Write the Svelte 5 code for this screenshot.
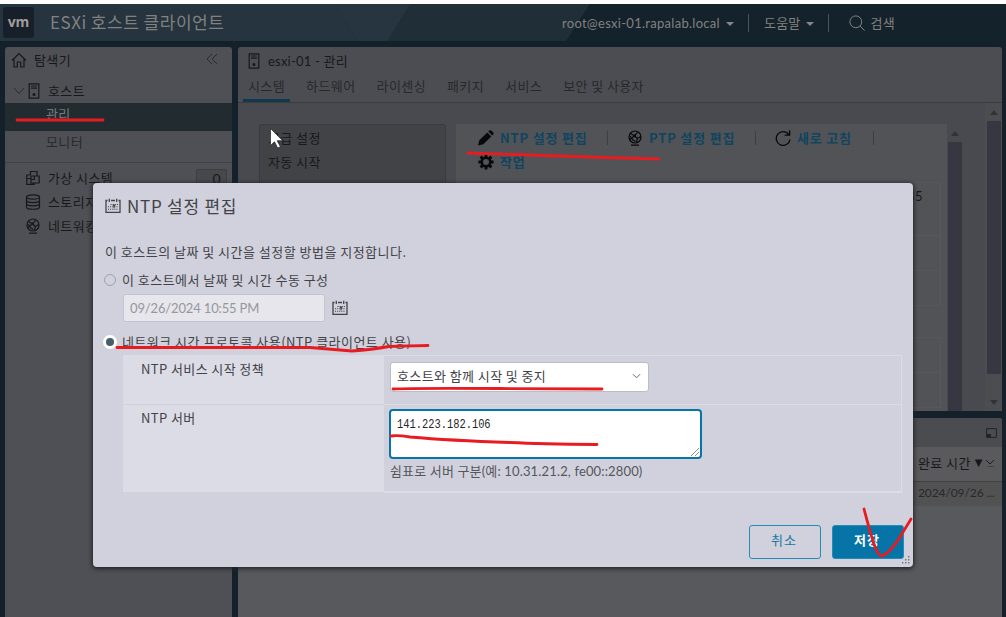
<script lang="ts">
  let tabs: string[] = ["시스템", "하드웨어", "라이센싱", "패키지", "서비스", "보안 및 사용자"];
  let settings: string[] = ["고급 설정", "자동 시작"];
  let inventory = [
    { icon: "vm", label: "가상 시스템", count: "0" },
    { icon: "disk", label: "스토리지", count: "" },
    { icon: "net", label: "네트워킹", count: "" },
  ];
  let activeTab: string = "시스템";
  let mode: string = "ntp";
  let date: string = "09/26/2024 10:55 PM";
  let server: string = "141.223.182.106";
</script>

{#snippet icon(name)}
  <svg class="icon" viewBox="0 0 16 16" fill="none" stroke="currentColor" stroke-width="1.2">
    {#if name == "home"}
      <path d="M1 8.5 8 1.5l7 7M3 7v8h3.3v-5h3.4v5H13V7" />
    {:else if name == "host"}
      <path d="M3.2.8h9.6v14.4H3.2zM5 3h6M5 5.2h6" />
      <circle cx="8" cy="11.4" r=".9" fill="currentColor" />
    {:else if name == "vm"}
      <path d="M5.5 5V1.5H12V6M5.5 5H1.8v9.3h7.500V13M1.800 8.500h4M6 6h8.200v7H6zM9.300 6v3.500H6" />
    {:else if name == "disk"}
      <ellipse cx="8" cy="3" rx="6.5" ry="2.2" />
      <path d="M1.5 3v10c0 3 13 3 13 0V3M1.5 6.3c0 3 13 3 13 0M1.5 9.6c0 3 13 3 13 0" />
    {:else if name == "net"}
      <circle cx="8" cy="7" r="6" />
      <path d="m3.500 3.500 4 2.300 3-3.500M7.500 5.800l2.800 2.700 3.500-2M10.300 8.500l-.8 4M7.500 5.800 3 9.500M4 15.200h8" />
      <path d="m3 6 3 4 2.500 1.500" />
      <circle cx="7.500" cy="5.800" r=".8" />
    {:else if name == "pencil"}
      <path d="m0 15.500 1.300-5.200L9.300 2.500l4 4-8 7.700zM10.300 1.600l1-1q1-.9 2 0l1.900 1.900q.9 1 0 1.900l-1 1z" fill="currentColor" stroke="none" />
    {:else if name == "refresh"}
      <path d="M13.800 4.500A6.900 6.900 0 1 0 15 9.500M14.600.2v4.900H9.700" stroke-width="1.300" />
    {:else if name == "gear"}
      <circle cx="8" cy="8" r="4.300" stroke-width="2.600" />
      <path d="M8 .4v3M8 12.600v3M.4 8h3M12.600 8h3M2.600 2.600l1.800 1.800M11.600 11.600l1.800 1.800M2.600 13.400l1.800-1.800M11.600 4.400l1.800-1.800" stroke-width="2.900" />
    {:else if name == "calendar"}
      <path d="M2.500 2.500H1v11.800h14V2.500h-1.500M6 2.500h4M4.300.8v3.100M11.700.8v3.100" stroke-width="1.300" />
      <path d="M5.500 6.500h8M3 8.800h10.500M3 11.300h10.500" stroke-width="1.100" stroke-dasharray="1.100 1" />
      <path d="M9 6.200v4M7.800 7.500h2.500" />
    {:else if name == "search"}
      <circle cx="6.8" cy="6.8" r="5.9" stroke-width="1" />
      <path d="m11 11 4.6 4.600" stroke-width="1" />
    {/if}
  </svg>
{/snippet}

<div class="app">
  <header>
    <svg class="facets" viewBox="0 0 1006 37" preserveAspectRatio="none">
      <path d="M0 0h1006v37H0z" fill="#14222c" />
      <path d="M0 0h590L566 37H0z" fill="#202e38" />
      <path d="M335 0h75L387 37H357z" fill="#26353f" />
      <path d="M0 0h335l22 37H0z" fill="#25343e" />
    </svg>
    <div class="logo">vm</div>
    <h1>ESXi 호스트 클라이언트</h1>
    <span class="user">root@esxi-01.rapalab.local</span><i class="caret"></i>
    <i class="bar"></i>
    <span class="help">도움말</span><i class="caret"></i>
    <i class="bar second"></i>
    <span class="glass">{@render icon("search")}</span>
    <span>검색</span>
  </header>

  <div class="workspace">
    <nav>
      <div class="nav-title">{@render icon("home")}<span>탐색기</span>
        <svg class="collapse" viewBox="0 0 12 12"><path d="M6 1 1 6l5 5M11 1 6 6l5 5" /></svg>
      </div>
      <div class="nav-host">
        <svg class="chevron" viewBox="0 0 12 8"><path d="m1 1 5 5.5L11 1" /></svg>
        {@render icon("host")}<span>호스트</span>
      </div>
      <div class="nav-sub selected">관리</div>
      <div class="nav-sub">모니터</div>
      <div class="nav-list">
        {#each inventory as item}
          <div class="nav-item">
            {@render icon(item.icon)}<span>{item.label}</span>
            {#if item.count}<b class="count">{item.count}</b>{/if}
          </div>
        {/each}
      </div>
    </nav>

    <div class="right">
      <section class="content">
        <div class="crumb">{@render icon("host")}<span>esxi-01 - 관리</span></div>
        <div class="tabs">
          {#each tabs as tab}
            <button class="tab" class:active={tab == activeTab} on:click={() => (activeTab = tab)}>{tab}</button>
          {/each}
        </div>
        <div class="body">
          <div class="menu">
            {#each settings as item}<div>{item}</div>{/each}
          </div>
          <div class="detail">
            <div class="toolbar">
              <div class="tool ntp">{@render icon("pencil")}<span>NTP 설정 편집</span></div>
              <div class="tool ptp">{@render icon("net")}<span>PTP 설정 편집</span></div>
              <div class="tool fresh">{@render icon("refresh")}<span>새로 고침</span></div>
            </div>
            <div class="toolbar last">
              <div class="tool">{@render icon("gear")}<span>작업</span></div>
            </div>
            <div class="card">
              <div class="cell tall">35</div>
              <div class="cell"></div>
              <div class="cell"></div>
            </div>
            <div class="card">
              <div class="cell"></div>
              <div class="cell"></div>
            </div>
          </div>
          <div class="scroll inner"><i class="up"></i><i class="thumb"></i></div>
          <div class="scroll outer"><i class="up"></i><i class="thumb"></i><i class="down"></i></div>
        </div>
      </section>

      <section class="tasks">
        <div class="tasks-bar">
          <svg viewBox="0 0 11 10"><path d="M.6.6h9.8v8.8H.6z" fill="none" stroke="#222327" /><path d="M1 6h4v3.4H1z" fill="#222327" /></svg>
        </div>
        <div class="tasks-head">완료 시간<small>▼</small>
          <svg viewBox="0 0 10 9"><path d="m1 1 4 4 4-4" fill="none" stroke="#1d1e20" /><path d="M3 7.5h6" stroke="#333" stroke-dasharray="1.4 1" /></svg>
        </div>
        <div class="tasks-row">2024/09/26 ...</div>
      </section>
    </div>
  </div>

  <div class="dialog">
    <h2>{@render icon("calendar")}<span>NTP 설정 편집</span></h2>
    <p>이 호스트의 날짜 및 시간을 설정할 방법을 지정합니다.</p>
    <label class="choice"><i class="radio" class:on={mode == "manual"}></i>이 호스트에서 날짜 및 시간 수동 구성</label>
    <div class="date"><div class="field">{date}</div>{@render icon("calendar")}</div>
    <label class="choice"><i class="radio" class:on={mode == "ntp"}></i>네트워크 시간 프로토콜 사용(NTP 클라이언트 사용)</label>
    <div class="form">
      <div class="name">NTP 서비스 시작 정책</div>
      <div class="value">
        <div class="select">호스트와 함께 시작 및 중지
          <svg viewBox="0 0 10 6"><path d="m1 1 4 4 4-4" /></svg>
        </div>
      </div>
      <div class="name">NTP 서버</div>
      <div class="value server">
        <div class="area"><span>{server}</span>
          <svg viewBox="0 0 10 10"><path d="M1 9 9 1M5 9l4-4" /></svg>
        </div>
        <div class="hint">쉼표로 서버 구분(예: 10.31.21.2, fe00::2800)</div>
      </div>
    </div>
    <div class="actions">
      <button class="cancel">취소</button>
      <button class="save">저장</button>
    </div>
    <svg class="grip" viewBox="0 0 8 8" fill="#77777f"><path d="M6 0h1.4v1.4H6zM3 3h1.4v1.4H3zM6 3h1.4v1.4H6zM0 6h1.4v1.4H0zM3 6h1.4v1.4H3zM6 6h1.4v1.4H6z" /></svg>
  </div>

  <!-- hand-drawn marks and the mouse pointer -->
  <svg class="marks" viewBox="0 0 1006 617">
    <g fill="none" stroke="#e81c20" stroke-width="2.8" stroke-linecap="round" stroke-linejoin="round">
      <path d="M17 120H103" />
      <path d="M468 153L515 154.5L572 156.5L659 159" />
      <path d="M117 347.500H310Q335 349.500 352 351Q372 349.500 389 346.500Q398 346 428 345.500" />
      <path d="M393 389Q410 388 500 388.500L602 389" />
      <path d="M391 436Q397 435 410 437Q450 440.500 510 442.500Q540 444 597 444.500" />
      <path d="M864 509C867 520 870 533 875 547Q879 556 882 556Q890 553 900 537L911 519" />
    </g>
    <path d="M270.500 128.500v17l4-3.700 3.200 6.200 2.700-1.300-3.200-6h5.400z" fill="#fff" stroke="#222" stroke-width=".7" />
  </svg>
</div>

<style>
  :global(body) {
    margin: 0;
    overflow: hidden;
  }
  .app {
    position: relative;
    width: 1006px;
    height: 617px;
    box-sizing: border-box;
    border-top: 4px solid #fdfdfd;
    overflow: hidden;
    background: #14212a;
    color: #17181b;
    font: 13px/20px "Noto Sans CJK KR", sans-serif;
    letter-spacing: 0.4px;
    white-space: nowrap;
  }
  .app * {
    box-sizing: border-box;
  }
  button {
    font: inherit;
    letter-spacing: inherit;
    border: 0;
    background: none;
    padding: 0;
  }
  .icon {
    width: 16px;
    height: 16px;
    flex: none;
  }
  header {
    position: relative;
    display: flex;
    align-items: center;
    height: 37px;
    color: #828180;
  }
  header > * {
    position: relative;
  }
  .facets {
    position: absolute;
    left: 0;
    top: 0;
    width: 1006px;
    height: 37px;
  }
  .logo {
    width: 31px;
    height: 31px;
    margin-left: 3px;
    border-radius: 3px;
    background: #17202a;
    color: #a09d9b;
    font: bold 14px/30px "Open Sans", sans-serif;
    letter-spacing: 0;
    text-align: center;
  }
  h1 {
    width: 512px;
    margin: 0 0 1px 16px;
    font-size: 17px;
    font-weight: 400;
    letter-spacing: 0.5px;
  }
  .user {
    width: 158px;
    font-family: Lato, sans-serif;
    letter-spacing: 0.28px;
  }
  .caret {
    margin: 2px 0 0 6px;
    border: 4px solid transparent;
    border-top-color: #858585;
    border-bottom: 0;
  }
  .bar {
    width: 1px;
    height: 18px;
    margin: 0 15px 0 14px;
    background: #4b555c;
  }
  .help {
    letter-spacing: 0.2px;
  }
  .bar.second {
    margin: 0 20px 0 14px;
  }
  .glass {
    display: flex;
    margin-right: 5px;
  }
  .workspace {
    display: flex;
    gap: 6px;
    height: 570px;
    margin: 6px 4px 0 5px;
  }
  nav {
    width: 227px;
    border-radius: 3px 3px 0 0;
    background: #4f5055;
  }
  .nav-title {
    display: flex;
    align-items: center;
    height: 27px;
    padding: 0 0 2px 6px;
  }
  .nav-title span {
    margin-left: 7px;
  }
  .collapse {
    width: 12px;
    height: 12px;
    margin: 0 14px 1px auto;
    fill: none;
    stroke: #292a2e;
  }
  .nav-host {
    display: flex;
    align-items: center;
    height: 29px;
    padding: 4px 0 0 8px;
  }
  .chevron {
    width: 12px;
    height: 8px;
    margin-right: 1px;
    fill: none;
    stroke: #292a2e;
  }
  .nav-host span {
    margin-left: 6px;
  }
  .nav-sub {
    height: 31px;
    padding: 1px 0 0 41px;
    color: #28292c;
  }
  .nav-sub.selected {
    height: 28px;
    background: #222c30;
    color: #77797b;
  }
  .nav-list {
    border-top: 1px solid #414246;
    padding-top: 3px;
  }
  .nav-item {
    display: flex;
    align-items: center;
    height: 24px;
    padding: 0 0 1px 20px;
  }
  .nav-item span {
    margin-left: 7px;
  }
  .count {
    width: 31px;
    height: 20px;
    margin: 2px 5px 0 auto;
    padding-right: 5px;
    border: 1px solid #3d3e42;
    border-radius: 2px;
    background: #47484c;
    font: 14px/18px Lato, sans-serif;
    text-align: right;
  }
  .right {
    display: flex;
    flex-direction: column;
    gap: 7px;
    width: 764px;
  }
  .content {
    height: 364px;
    border-radius: 3px;
    background: #4c4d52;
  }
  .crumb {
    display: flex;
    align-items: center;
    gap: 6px;
    height: 27px;
    padding-left: 8px;
    font-family: Lato, "Noto Sans CJK KR", sans-serif;
    letter-spacing: 0.2px;
  }
  .tabs {
    display: flex;
    gap: 11px;
    height: 29px;
    padding-left: 5px;
    border-bottom: 1px solid #3b3c40;
  }
  .tab {
    height: 28px;
    padding: 0 5px 4px;
    color: #27282b;
  }
  .tab.active {
    border-bottom: 3px solid #11384f;
    padding-bottom: 1px;
  }
  .body {
    display: flex;
    height: 308px;
    padding-left: 21px;
    background: #494a4f;
  }
  .menu {
    width: 187px;
    margin: 21px 10px 0 0;
    padding: 1px 0 0 8px;
    border: 1px solid #3a3b3f;
    border-radius: 3px;
    background: #424347;
    line-height: 24px;
  }
  .detail {
    width: 491px;
    margin-top: 21px;
    padding-right: 6px;
    background: #525357;
  }
  .toolbar {
    display: flex;
    height: 27px;
    padding-left: 22px;
    color: #0f455e;
    font-weight: 700;
    letter-spacing: 0.8px;
  }
  .toolbar.last {
    height: 31px;
  }
  .tool {
    display: flex;
    align-items: center;
    gap: 6px;
    height: 22px;
    margin-top: 3px;
  }
  .toolbar.last .tool {
    margin-top: 0;
  }
  .tool .icon {
    color: #08090a;
  }
  .ntp {
    width: 149px;
  }
  .ptp {
    width: 148px;
  }
  .ntp::after,
  .ptp::after,
  .fresh::after {
    content: "";
    width: 1px;
    height: 14px;
    margin-left: auto;
    margin-right: 19px;
    background: #3d3e42;
  }
  .fresh {
    width: 118px;
  }
  .card {
    margin-bottom: 31px;
    border: 1px solid #57585c;
    border-bottom: 0;
  }
  .cell {
    height: 35px;
    border-bottom: 1px solid #57585c;
    padding-right: 17px;
    text-align: right;
    font: 13px/26px Lato, sans-serif;
  }
  .cell.tall {
    height: 53px;
  }
  .scroll {
    display: flex;
    flex-direction: column;
    align-items: center;
  }
  .inner {
    width: 16px;
    margin-top: 21px;
  }
  .outer {
    width: 17px;
    margin-left: auto;
    background: #4c4d50;
  }
  .up,
  .down {
    border: 4px solid transparent;
    border-top: 0;
    border-bottom: 5px solid #323338;
  }
  .up {
    margin: 7px 0 6px;
  }
  .thumb {
    width: 14px;
    height: 269px;
    flex: none;
    background: #373741;
  }
  .outer .thumb {
    height: 253px;
  }
  .down {
    margin-top: 26px;
    transform: rotate(180deg);
  }
  .tasks {
    flex: 1;
    border-radius: 3px 3px 0 0;
    background: #58595d;
  }
  .tasks-bar {
    display: flex;
    height: 29px;
    align-items: center;
    justify-content: flex-end;
    padding-right: 5px;
    border-radius: 3px 3px 0 0;
    background: #4b4c50;
  }
  .tasks-bar svg {
    width: 11px;
    height: 10px;
  }
  .tasks-head {
    display: flex;
    align-items: center;
    height: 35px;
    padding: 0 0 2px 680px;
    background: #5a5a5c;
    border-bottom: 1px solid #404144;
  }
  .tasks-head small {
    margin-left: 4px;
    font: 10px/16px "DejaVu Sans", sans-serif;
    letter-spacing: 0;
  }
  .tasks-head svg {
    width: 10px;
    height: 9px;
    margin-left: 3px;
    flex: none;
  }
  .tasks-row {
    height: 24px;
    padding: 1px 0 0 680px;
    background: #525253;
    font: 12px/20px Lato, sans-serif;
    letter-spacing: -0.1px;
    color: #28292b;
  }
  .dialog {
    position: absolute;
    left: 93px;
    top: 179px;
    width: 820px;
    height: 384px;
    padding: 10px 11px 0 12px;
    border-radius: 4px;
    background: #d1d1dd;
    color: #424347;
    box-shadow: 0 1px 4px 1px #242529;
  }
  h2 {
    display: flex;
    align-items: center;
    gap: 6px;
    height: 26px;
    margin: 0;
    padding-bottom: 1px;
    font-size: 17px;
    font-weight: 400;
    letter-spacing: 0.75px;
  }
  p {
    height: 20px;
    margin: 23px 0 8px;
    letter-spacing: 0.48px;
  }
  .choice {
    display: flex;
    align-items: center;
    height: 20px;
    letter-spacing: 0.46px;
  }
  .radio {
    width: 12px;
    height: 12px;
    margin: 0 6px 0 -1px;
    border: 1px solid #a1a1a9;
    border-radius: 50%;
  }
  .radio.on {
    border: 3px solid #fff;
    width: 14px;
    height: 14px;
    margin: 0 5px 0 -2px;
    background: #445e6b;
  }
  .date {
    display: flex;
    align-items: center;
    gap: 7px;
    height: 28px;
    margin: 4px 0 10px 18px;
  }
  .field {
    width: 202px;
    height: 28px;
    padding-left: 6px;
    border: 1px solid #c4c4ce;
    border-radius: 2px;
    background: #e6e6ec;
    color: #96969c;
    font: 13px/26px Lato, sans-serif;
    letter-spacing: -0.15px;
  }
  .form {
    display: grid;
    grid-template: 49px 88px / 260px 519px;
    margin: 3px 0 0 18px;
    border: 1px solid #dbdbe4;
    width: 779px;
    height: 137px;
  }
  .name {
    padding: 3px 0 0 17px;
    background: #dcdce6;
    border-bottom: 1px solid #d1d1dc;
  }
  .value {
    padding: 6px 0 0 6px;
    border-bottom: 1px solid #dcdce5;
  }
  .select {
    display: flex;
    align-items: center;
    justify-content: space-between;
    width: 259px;
    height: 30px;
    padding: 0 7px 2px 6px;
    border: 1px solid #bcbcc1;
    border-radius: 3px;
    background: #fff;
  }
  .select svg {
    width: 9px;
    height: 6px;
    fill: none;
    stroke: #55565c;
  }
  .value.server {
    padding: 4px 0 0 5px;
  }
  .area {
    position: relative;
    width: 313px;
    height: 50px;
    padding: 3px 6px;
    border: 2px solid #0775a8;
    border-radius: 4px;
    background: #fff;
    color: #252525;
    font: 13px/22px "Liberation Mono", monospace;
    letter-spacing: 0;
  }
  /* condensed fixed-width digits */
  .area span {
    display: inline-block;
    transform: scaleX(0.8);
    transform-origin: left;
  }
  .area svg {
    position: absolute;
    right: 0;
    bottom: 0;
    width: 10px;
    height: 10px;
    stroke: #777;
    stroke-width: 0.8;
  }
  .hint {
    padding: 2px 0 0 1px;
    font-family: Lato, "Noto Sans CJK KR", sans-serif;
    letter-spacing: 0.15px;
    color: #55565b;
  }
  .actions {
    display: flex;
    justify-content: flex-end;
    gap: 11px;
    margin: 33px -2px 0 0;
  }
  .actions button {
    width: 72px;
    height: 34px;
    padding: 0 2px 4px 0;
    border: 1px solid #278bb7;
    border-radius: 3px;
    color: #19749e;
    letter-spacing: 1px;
  }
  .actions .save {
    background: #0674a7;
    color: #fff;
    font-weight: 700;
  }
  .grip {
    position: absolute;
    right: 3px;
    bottom: 3px;
    width: 8px;
    height: 8px;
  }
  .marks {
    position: absolute;
    left: 0;
    top: -4px;
    width: 1006px;
    height: 617px;
    pointer-events: none;
  }
</style>
